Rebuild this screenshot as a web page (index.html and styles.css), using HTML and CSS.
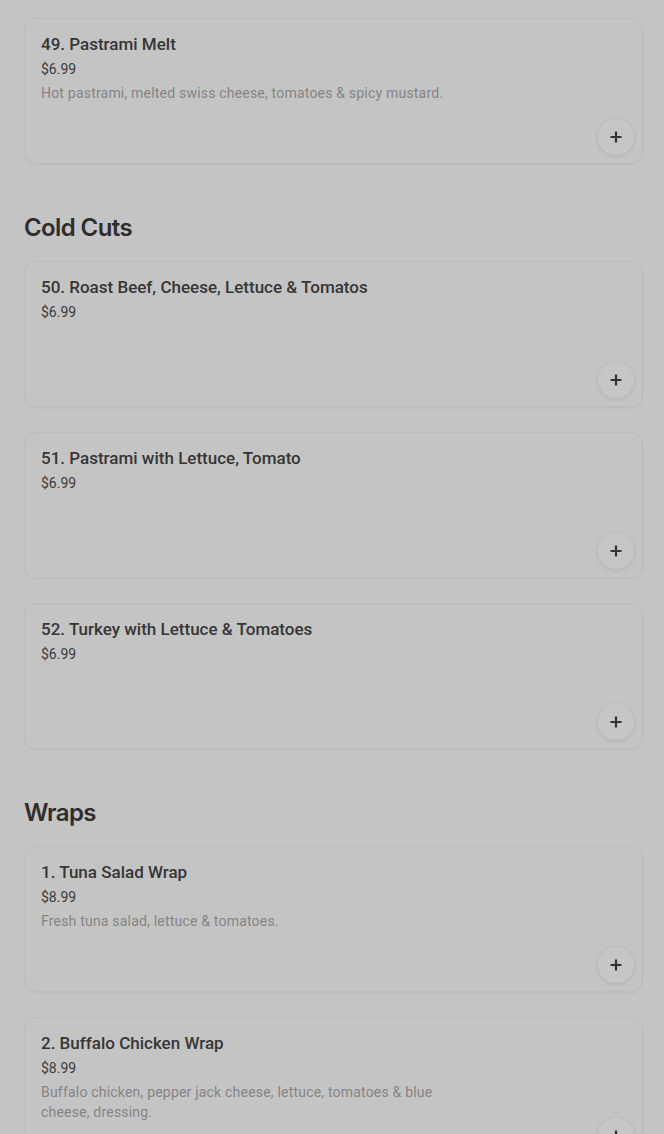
FILE: index.html
```html
<!DOCTYPE html>
<html lang="en">
<head>
    <meta charset="UTF-8">
    <meta name="viewport" content="width=device-width, initial-scale=1.0">
    <title>Menu</title>
    <link rel="stylesheet" href="styles.css">
</head>
<body>
    <div class="menu">
        <div class="section">
            <div class="items">
                <div class="item">
                    <div class="item-name">49. Pastrami Melt</div>
                    <div class="item-price">$6.99</div>
                    <div class="item-desc">Hot pastrami, melted swiss cheese, tomatoes &amp; spicy mustard.</div>
                    <button class="add-btn" aria-label="Add">
                        <svg width="14" height="14" viewBox="0 0 14 14"><path d="M7 1.5v11M1.5 7h11" stroke="#333" stroke-width="2.2"/></svg>
                    </button>
                </div>
            </div>
        </div>

        <div class="section">
            <h2>Cold Cuts</h2>
            <div class="items">
                <div class="item">
                    <div class="item-name">50. Roast Beef, Cheese, Lettuce &amp; Tomatos</div>
                    <div class="item-price">$6.99</div>
                    <button class="add-btn" aria-label="Add">
                        <svg width="14" height="14" viewBox="0 0 14 14"><path d="M7 1.5v11M1.5 7h11" stroke="#333" stroke-width="2.2"/></svg>
                    </button>
                </div>
                <div class="item">
                    <div class="item-name">51. Pastrami with Lettuce, Tomato</div>
                    <div class="item-price">$6.99</div>
                    <button class="add-btn" aria-label="Add">
                        <svg width="14" height="14" viewBox="0 0 14 14"><path d="M7 1.5v11M1.5 7h11" stroke="#333" stroke-width="2.2"/></svg>
                    </button>
                </div>
                <div class="item">
                    <div class="item-name">52. Turkey with Lettuce &amp; Tomatoes</div>
                    <div class="item-price">$6.99</div>
                    <button class="add-btn" aria-label="Add">
                        <svg width="14" height="14" viewBox="0 0 14 14"><path d="M7 1.5v11M1.5 7h11" stroke="#333" stroke-width="2.2"/></svg>
                    </button>
                </div>
            </div>
        </div>

        <div class="section">
            <h2>Wraps</h2>
            <div class="items">
                <div class="item">
                    <div class="item-name">1. Tuna Salad Wrap</div>
                    <div class="item-price">$8.99</div>
                    <div class="item-desc">Fresh tuna salad, lettuce &amp; tomatoes.</div>
                    <button class="add-btn" aria-label="Add">
                        <svg width="14" height="14" viewBox="0 0 14 14"><path d="M7 1.5v11M1.5 7h11" stroke="#333" stroke-width="2.2"/></svg>
                    </button>
                </div>
                <div class="item">
                    <div class="item-name">2. Buffalo Chicken Wrap</div>
                    <div class="item-price">$8.99</div>
                    <div class="item-desc">Buffalo chicken, pepper jack cheese, lettuce, tomatoes &amp; blue cheese, dressing.</div>
                    <button class="add-btn" aria-label="Add">
                        <svg width="14" height="14" viewBox="0 0 14 14"><path d="M7 1.5v11M1.5 7h11" stroke="#333" stroke-width="2.2"/></svg>
                    </button>
                </div>
            </div>
        </div>
    </div>
</body>
</html>
```

FILE: styles.css
```css
body {
    margin: 0;
    background-color: #c4c4c4;
    font-family: Roboto, "Liberation Sans", sans-serif;
    color: #333;
    overflow: hidden;
}
.menu {
    padding: 18px 21px 0 24px;
}
.section {
    margin-bottom: 48px;
}
.section h2 {
    font-family: Inter, "Liberation Sans", sans-serif;
    font-size: 24px;
    font-weight: 600;
    letter-spacing: -0.6px;
    color: #2e2e2e;
    margin: 0 0 17px;
    line-height: 32px;
}
.items {
    display: flex;
    flex-direction: column;
    gap: 25px;
}
.item {
    position: relative;
    box-sizing: border-box;
    min-height: 146px;
    padding: 14px 16px 40px;
    border: 1px solid #bdbdbd;
    border-radius: 12px;
    box-shadow: 0 1px 2px rgba(0,0,0,0.04);
}
.item-name {
    font-size: 17px;
    font-weight: 500;
    line-height: 22px;
    color: #363636;
}
.item-price {
    font-size: 14px;
    line-height: 20px;
    margin-top: 4px;
    color: #3c3c3c;
}
.item-desc {
    font-size: 14px;
    line-height: 20px;
    margin-top: 4px;
    letter-spacing: 0.2px;
    color: #858585;
    max-width: 440px;
}
.add-btn {
    position: absolute;
    right: 8px;
    bottom: 8px;
    width: 36px;
    height: 36px;
    border: none;
    border-radius: 50%;
    background-color: #c6c6c6;
    box-shadow: 0 1px 5px rgba(0,0,0,0.1);
    display: flex;
    align-items: center;
    justify-content: center;
    padding: 0;
}
```
